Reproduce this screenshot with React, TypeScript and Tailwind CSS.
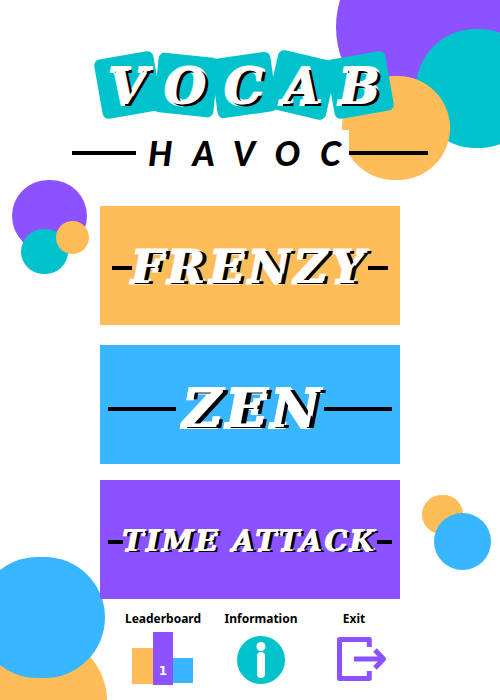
import React from "react";

const display =
  "font-['DejaVu_Serif',serif] font-bold italic text-white [paint-order:stroke_fill] [stroke-linejoin:round]";

const tiles = [
  { letter: "V", tilt: "-rotate-10" },
  { letter: "O", tilt: "rotate-6" },
  { letter: "C", tilt: "-rotate-8" },
  { letter: "A", tilt: "rotate-13" },
  { letter: "B", tilt: "-rotate-10" },
];

const modes = [
  {
    name: "FRENZY",
    box: "mb-5 bg-[#ffbd59] px-3 pt-1",
    text: "text-[45px] [-webkit-text-stroke:3px_white] [text-shadow:4px_1px_0_#000]",
  },
  {
    name: "ZEN",
    box: "mb-4 bg-[#38b6ff] px-2 pt-2",
    text: "pl-2 text-[52px] [-webkit-text-stroke:4px_white] [text-shadow:5px_1px_0_#000]",
  },
  {
    name: "TIME ATTACK",
    box: "bg-[#8c52ff] px-2 pt-1",
    text: "text-[28px] [-webkit-text-stroke:2px_white] [text-shadow:3px_1px_0_#000]",
  },
];

function Rule({ size = "min-w-0 flex-1" }: { size?: string }) {
  return <span aria-hidden="true" className={`h-1 bg-black ${size}`} />;
}

function Bubbles() {
  return (
    <div aria-hidden="true" className="pointer-events-none absolute inset-0">
      <div className="absolute -top-[66px] -right-[22px] size-[186px] rounded-full bg-[#8c52ff]" />
      <div className="absolute top-[29px] -right-[39px] h-[119px] w-[123px] rounded-full bg-[#00c2cb]" />
      <div className="absolute top-[76px] right-[50px] h-[104px] w-[108px] rounded-full bg-[#ffbd59]" />

      <div className="absolute top-[180px] left-3 h-[72px] w-[75px] rounded-full bg-[#8c52ff]" />
      <div className="absolute top-[229px] left-[21px] h-[45px] w-[47px] rounded-full bg-[#00c2cb]" />
      <div className="absolute top-[221px] left-14 size-[33px] rounded-full bg-[#ffbd59]" />

      <div className="absolute top-[495px] right-[37px] h-[39px] w-[41px] rounded-full bg-[#ffbd59]" />
      <div className="absolute top-[513px] right-[9px] size-[57px] rounded-full bg-[#38b6ff]" />

      <div className="absolute top-[635px] -left-[25px] size-[132px] rounded-full bg-[#ffbd59]" />
      <div className="absolute top-[557px] -left-[23px] h-[121px] w-[128px] rounded-full bg-[#38b6ff]" />
    </div>
  );
}

function Podium() {
  return (
    <svg viewBox="0 0 62 54" className="h-[54px] w-[62px]" aria-hidden="true">
      <rect x="0" y="16" width="21" height="36" fill="#ffbd59" />
      <rect x="41" y="26" width="20" height="25" fill="#38b6ff" />
      <rect x="21" y="0" width="20" height="53" fill="#8c52ff" />
      <text
        x="31"
        y="43"
        textAnchor="middle"
        fill="#fff"
        className="font-['DejaVu_Sans',sans-serif] text-[12px] font-bold"
      >
        1
      </text>
    </svg>
  );
}

function InfoIcon() {
  return (
    <svg viewBox="0 0 48 48" className="size-12" aria-hidden="true">
      <circle cx="24" cy="24" r="24" fill="#00c2cb" />
      <circle cx="24" cy="10.5" r="4.5" fill="#fff" />
      <rect x="20" y="16" width="8" height="26" rx="4" fill="#fff" />
    </svg>
  );
}

function ExitIcon() {
  return (
    <svg
      viewBox="0 0 50 46"
      className="h-[46px] w-[50px]"
      fill="none"
      stroke="#8c52ff"
      strokeWidth="5"
      aria-hidden="true"
    >
      <path d="M32.3 11V3.5H2.5v39h29.8V35" strokeLinejoin="round" />
      <path d="M17 23h29M38 14l8.500 9-8.500 9" strokeLinejoin="round" />
    </svg>
  );
}

export default function App() {
  return (
    <main className="relative flex min-h-screen flex-col overflow-hidden bg-white">
      <Bubbles />

      <div className="relative mx-auto flex w-full max-w-[356px] flex-col pt-[55px]">
        <h1>
          <span className="flex justify-center -space-x-0.5 pr-3">
            {tiles.map(({ letter, tilt }) => (
              <span key={letter} className="relative grid size-[60px] place-items-center">
                <span className={`absolute inset-0 rounded-md bg-[#00c2cb] ${tilt}`} />
                <span
                  className={`relative pt-1 text-[48px] leading-none [-webkit-text-stroke:4px_white] [text-shadow:3px_2px_0_#000] ${display}`}
                >
                  {letter}
                </span>
              </span>
            ))}
          </span>
          <span className="mt-[15px] flex items-center">
            <Rule size="w-16" />
            <span className="bg-white pl-3">
              <span className="-mr-3 block font-['Lato',sans-serif] text-[34px] leading-[46px] font-black tracking-[20px] text-black italic">
                HAVOC
              </span>
            </span>
            <Rule />
          </span>
        </h1>
      </div>

      <nav className="relative mx-auto mt-[30px] flex w-[300px] flex-col" aria-label="Game modes">
        {modes.map(({ name, box, text }) => (
          <button
            key={name}
            type="button"
            className={`flex h-[119px] items-center whitespace-nowrap ${box}`}
          >
            <Rule />
            <span className={`tracking-widest ${display} ${text}`}>{name}</span>
            <Rule />
          </button>
        ))}
      </nav>

      <div className="relative mt-[11px] flex justify-center pl-3 font-['Noto_Sans',sans-serif] text-[12px] leading-[18px] font-bold text-black">
        <button type="button" className="mr-6 flex w-[76px] flex-col items-center gap-1">
          Leaderboard
          <Podium />
        </button>
        <button type="button" className="mr-10 flex w-[72px] flex-col items-center gap-2">
          Information
          <InfoIcon />
        </button>
        <button type="button" className="flex w-[50px] flex-col items-center gap-2">
          <span className="pr-4">Exit</span>
          <ExitIcon />
        </button>
      </div>
    </main>
  );
}
